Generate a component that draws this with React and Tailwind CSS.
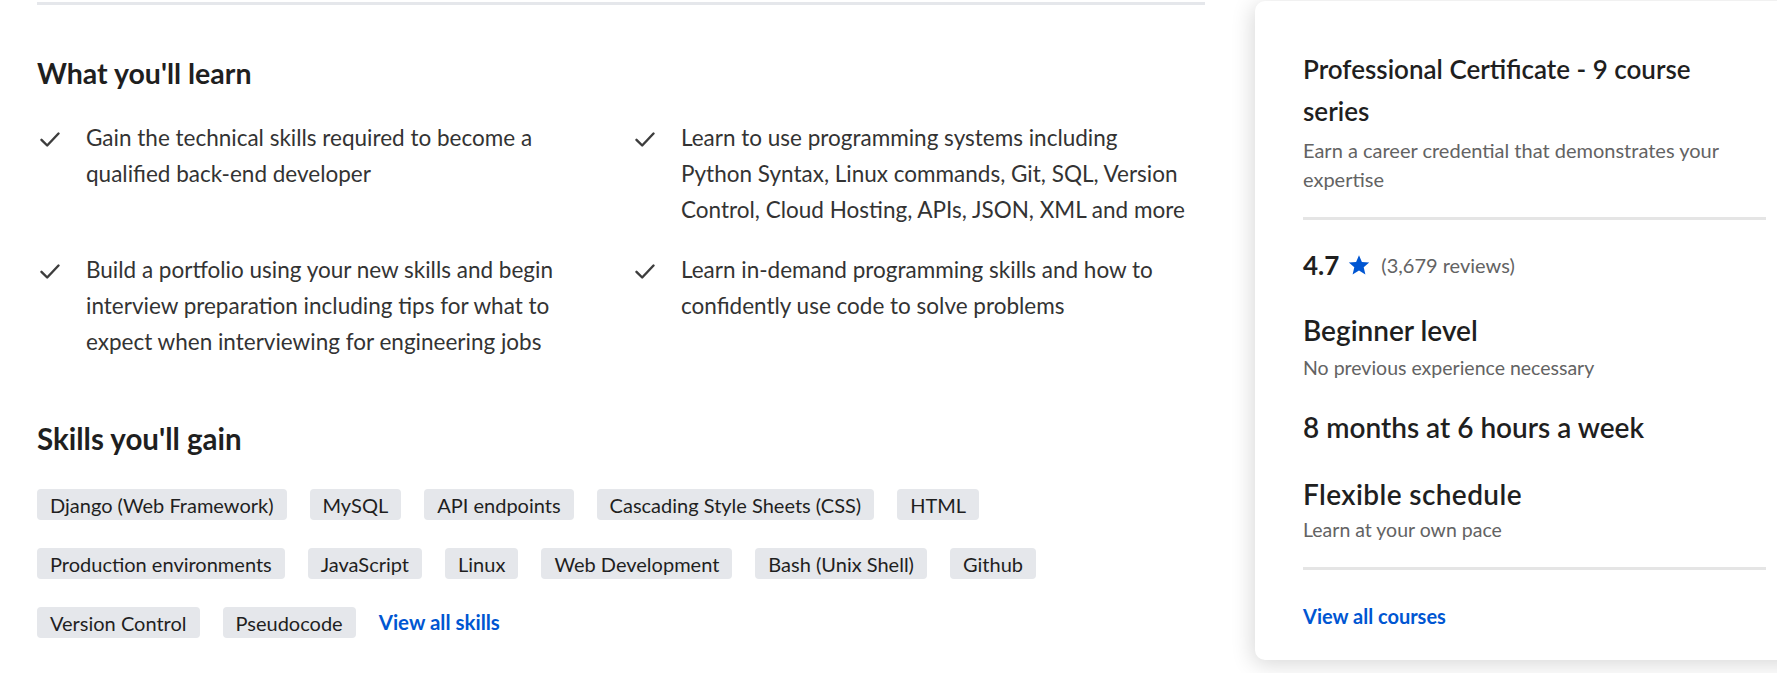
const learn = [
  [
    ["Gain the technical skills required to become a", "qualified back-end developer"],
    ["Learn to use programming systems including", "Python Syntax, Linux commands, Git, SQL, Version", "Control, Cloud Hosting, APIs, JSON, XML and more"],
  ],
  [
    ["Build a portfolio using your new skills and begin", "interview preparation including tips for what to", "expect when interviewing for engineering jobs"],
    ["Learn in-demand programming skills and how to", "confidently use code to solve problems"],
  ],
];

const skillRows = [
  ["Django (Web Framework)", "MySQL", "API endpoints", "Cascading Style Sheets (CSS)", "HTML"],
  ["Production environments", "JavaScript", "Linux", "Web Development", "Bash (Unix Shell)", "Github"],
  ["Version Control", "Pseudocode"],
];

function Check() {
  return (
    <svg width="20" height="17" viewBox="0 0 20 17" className="ml-[3px] mt-[11px] shrink-0" aria-hidden>
      <path d="M1.5 8.8 L7.2 14.5 L18.5 2.5" fill="none" stroke="#3d3d3d" strokeWidth="2.4" strokeLinecap="round" strokeLinejoin="round" />
    </svg>
  );
}

function LearnItem({ lines }) {
  return (
    <li className="flex gap-[26px]">
      <Check />
      <p className="text-[22.5px] leading-[36px] text-[#333]">
        {lines.map((l) => (
          <span key={l} className="block whitespace-nowrap">{l}</span>
        ))}
      </p>
    </li>
  );
}

function Star() {
  return (
    <svg width="24" height="24" viewBox="0 0 24 24" aria-hidden>
      <path d="M12 2.2l2.9 6.7 7.3.6-5.5 4.8 1.7 7.1L12 17.6l-6.4 3.8 1.7-7.1L1.8 9.5l7.3-.6z" fill="#0056d2" />
    </svg>
  );
}

export default function App() {
  return (
    <div className="flex h-[673px] w-[1777px] overflow-hidden bg-white font-['Lato',sans-serif] text-[#1f1f1f]">
      <main className="w-[1205px] shrink-0 pl-[37px]">
        <div className="mt-[2px] h-[3px] bg-[#e5e7eb]" />

        <h2 className="mt-[52px] text-[28.5px] font-bold leading-[32px]">What you'll learn</h2>
        <ul className="mt-[31px] grid grid-cols-[595px_1fr] gap-y-[24px]">
          {learn.map((row) =>
            row.map((lines) => <LearnItem key={lines[0]} lines={lines} />)
          )}
        </ul>

        <h2 className="mt-[63px] text-[29.5px] font-bold leading-[32px]">Skills you'll gain</h2>
        <div className="mt-[34px] flex flex-col gap-[28px]">
          {skillRows.map((row, i) => (
            <div key={i} className="flex items-center gap-[23px]">
              {row.map((s) => (
                <span key={s} className="flex h-[31px] items-center rounded-[4px] bg-[#e5e7eb] px-[13px] text-[20px] text-[#1f1f1f]">
                  {s}
                </span>
              ))}
              {i === 2 && (
                <a className="text-[20.5px] font-bold text-[#0056d2]">View all skills</a>
              )}
            </div>
          ))}
        </div>
      </main>

      <aside className="ml-[50px] mt-[1px] h-[659px] w-[559px] shrink-0 rounded-[10px] bg-white px-[48px] pt-[47px] shadow-[-2px_4px_22px_rgba(0,0,0,0.16)]">
        <h3 className="text-[26px] font-semibold leading-[42px]">
          Professional Certificate - 9 course<br />series
        </h3>
        <p className="mt-[4px] text-[20px] leading-[29px] text-[#636363]">
          Earn a career credential that demonstrates your<br />expertise
        </p>
        <div className="mt-[23px] h-[3px] bg-[#e5e5e5]" />

        <div className="mt-[29px] flex h-[32px] items-center">
          <span className="text-[26px] font-bold leading-[32px]">4.7</span>
          <span className="ml-[8px]"><Star /></span>
          <span className="ml-[10px] text-[20px] text-[#636363]">(3,679 reviews)</span>
        </div>

        <h4 className="mt-[33px] text-[28px] font-semibold leading-[32px]">Beginner level</h4>
        <p className="mt-[8px] text-[19.5px] leading-[28px] text-[#636363]">No previous experience necessary</p>

        <h4 className="mt-[29px] text-[28px] font-semibold leading-[32px]">8 months at 6 hours a week</h4>

        <h4 className="mt-[35px] text-[28px] font-semibold leading-[32px] tracking-[0.4px]">Flexible schedule</h4>
        <p className="mt-[6px] text-[19.5px] leading-[28px] text-[#636363]">Learn at your own pace</p>

        <div className="mt-[23px] h-[3px] bg-[#e5e5e5]" />
        <a className="mt-[32px] block text-[20px] font-bold leading-[28px] text-[#0056d2]">View all courses</a>
      </aside>
    </div>
  );
}
